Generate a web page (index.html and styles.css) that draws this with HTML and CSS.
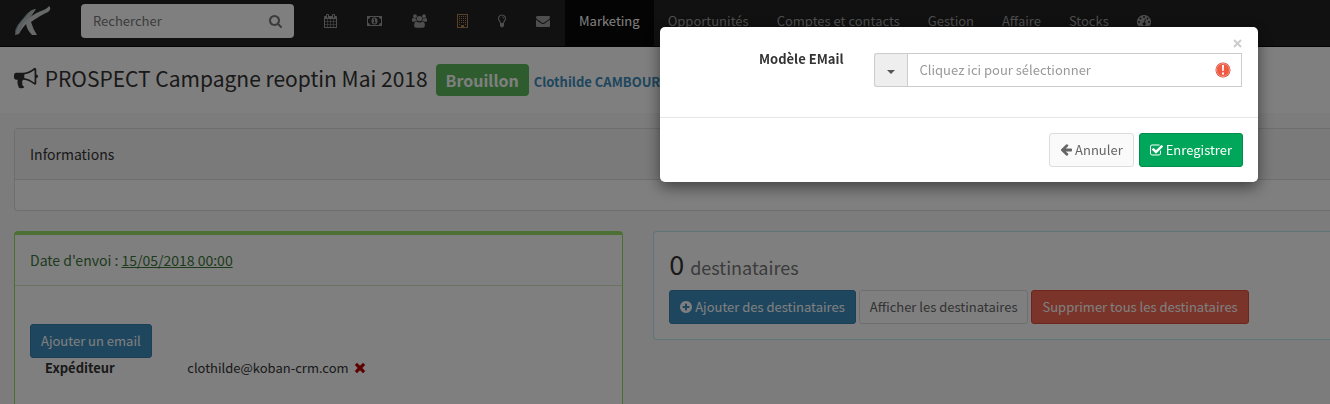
FILE: index.html
```
<!DOCTYPE html>
<html lang="fr">
<head>
    <meta charset="UTF-8">
    <meta name="viewport" content="width=device-width, initial-scale=1.0">
    <title>Campagne reoptin Mai 2018</title>
    <link rel="stylesheet" href="styles.css">
</head>
<body>

    <!-- Barre de navigation -->
    <header class="navbar">
        <a class="brand" href="#" aria-label="Accueil">
            <svg width="36" height="32" viewBox="0 0 36 32">
                <path d="M13 8 Q17 4 21 4 Q18 9 12 17 Q7 23 4 29 L0 30 Q0 23 7 15 Z" fill="#b9bec0"/>
                <path d="M8 19 Q17 9 26 6 Q32 4 34 1 Q37 4 33 7 Q26 10 16 17 Q18 24 22 30 L17 30 Q12 25 11 19 L5 26 Z" fill="#cfd2d3"/>
                <path d="M13 8 Q7 15 3 20 Q0 25 0 29" stroke="#6c8790" stroke-width="1" fill="none"/>
            </svg>
        </a>
        <form class="search">
            <input type="text" placeholder="Rechercher" aria-label="Rechercher">
            <button type="button" aria-label="Lancer la recherche">
                <svg width="13" height="13" viewBox="64 128 1664 1664"><path d="M1216 832q0-185-131.5-316.5t-316.5-131.5-316.5 131.5-131.5 316.5 131.5 316.5 316.5 131.5 316.5-131.5 131.5-316.5zm512 832q0 52-38 90t-90 38q-54 0-90-38l-343-342q-179 124-399 124-143 0-273.5-55.5t-225-150-150-225-55.5-273.5 55.5-273.5 150-225 225-150 273.5-55.5 273.5 55.5 225 150 150 225 55.5 273.5q0 220-124 399l343 343q37 37 37 90z"/></svg>
            </button>
        </form>
        <nav class="menu">
            <a href="#" aria-label="Agenda">
                <svg width="13" height="14" viewBox="64 0 1664 1792"><path d="M192 1664h288v-288h-288v288zm352 0h320v-288h-320v288zm-352-352h288v-320h-288v320zm352 0h320v-320h-320v320zm-352-384h288v-288h-288v288zm736 736h320v-288h-320v288zm-384-736h320v-288h-320v288zm768 736h288v-288h-288v288zm-384-352h320v-320h-320v320zm-352-864v-288q0-13-9.5-22.5t-22.5-9.5h-64q-13 0-22.5 9.5t-9.5 22.5v288q0 13 9.5 22.5t22.5 9.5h64q13 0 22.5-9.5t9.5-22.5zm736 864h288v-320h-288v320zm-384-384h320v-288h-320v288zm384 0h288v-288h-288v288zm32-480v-288q0-13-9.5-22.5t-22.5-9.5h-64q-13 0-22.5 9.5t-9.5 22.5v288q0 13 9.5 22.5t22.5 9.5h64q13 0 22.5-9.5t9.5-22.5zm384-64v1280q0 52-38 90t-90 38h-1408q-52 0-90-38t-38-90v-1280q0-52 38-90t90-38h128v-96q0-66 47-113t113-47h64q66 0 113 47t47 113v96h384v-96q0-66 47-113t113-47h64q66 0 113 47t47 113v96h128q52 0 90 38t38 90z"/></svg>
            </a>
            <a href="#" aria-label="Finances">
                <svg width="15" height="14" viewBox="0 0 15 14"><path fill-rule="evenodd" d="M0 2h15v10H0zM3 3Q3 5 1 5v4Q3 9 3 11h9Q12 9 14 9V5Q12 5 12 3z"/><ellipse cx="7.500" cy="7" rx="3" ry="3.500"/><path class="hole" d="M7 4.800h1v3.500h.8v.9H6.200v-.9H7V6h-.9z"/></svg>
            </a>
            <a href="#" aria-label="Contacts">
                <svg width="15" height="14" viewBox="0 0 15 14"><circle cx="3" cy="2.200" r="1.900"/><circle cx="12" cy="2.200" r="1.900"/><circle cx="7.500" cy="4.600" r="2.700"/><path d="M0 7V5.500Q0 4 1 4l2 .6L4.200 4.300Q4.200 6 5 7H4Q3 7 2.400 7.700H.9Q0 7.700 0 7zM15 7V5.500Q15 4 14 4l-2 .6-1.200-.3Q10.800 6 10 7h1q1 0 1.600.7h1.500Q15 7.700 15 7zM2.200 12v-1.500Q2.400 7.600 4.600 7.500 6 8.600 7.500 8.600T10.400 7.500q2.200.1 2.400 3V12q0 1.700-1.800 1.700H4Q2.200 13.700 2.200 12z"/></svg>
            </a>
            <a class="current-app" href="#" aria-label="Entreprises">
                <svg width="11" height="14" viewBox="0 0 11 14"><path fill-rule="evenodd" d="M0 0h11v14H0zM1 1v12h3v-2h3v2h3V1z"/><path d="M2 2h1v1H2zM4 2h1v1H4zM6 2h1v1H6zM8 2h1v1H8zM2 4h1v1H2zM4 4h1v1H4zM6 4h1v1H6zM8 4h1v1H8zM2 6h1v1H2zM4 6h1v1H4zM6 6h1v1H6zM8 6h1v1H8zM2 8h1v1H2zM4 8h1v1H4zM6 8h1v1H6zM8 8h1v1H8zM2 10h1v1H2zM8 10h1v1H8z"/></svg>
            </a>
            <a href="#" aria-label="Idées">
                <svg width="8" height="14" viewBox="0 0 8 14"><path fill-rule="evenodd" d="M4 .5Q8 1 8 4.500 8 6 7 7.200 6 8.500 6 9.800v1.700Q6 13 4 13.500 2 13 2 11.500V9.800Q2 8.500 1 7.200 0 6 0 4.500 0 1 4 .5zM4 1.600Q1.200 1.900 1.100 4.500q0 1 .8 2Q2.900 7.800 3 9h2q.1-1.200 1.100-2.500.8-1 .8-2Q6.800 1.900 4 1.600z"/><path d="M4 2.600q2 .2 2 1.900h-.7Q5.200 3.400 4 3.300z"/></svg>
            </a>
            <a href="#" aria-label="Messages">
                <svg width="14" height="14" viewBox="0 0 1792 1792"><path d="M1792 710v794q0 66-47 113t-113 47h-1472q-66 0-113-47t-47-113v-794q44 49 101 87 362 246 497 345 57 42 92.500 65.500t94.500 48 110 24.500h2q51 0 110-24.500t94.500-48 92.500-65.500q170-123 498-345 57-39 100-87zm0-294q0 79-49 151t-122 123q-376 261-468 325-10 7-42.500 31t-54 38.500-52 32.500-57.500 27-50 9h-2q-23 0-50-9t-57.500-27-52-32.500-54-38.500-42.500-31q-91-64-262-182.500t-205-142.500q-62-42-117-115.500t-55-136.500q0-78 41.500-130t118.500-52h1472q65 0 112.500 47t47.500 113z"/></svg>
            </a>
            <a class="item active" href="#">Marketing</a>
            <a class="item" href="#">Opportunités</a>
            <a class="item" href="#">Comptes et contacts</a>
            <a class="item" href="#">Gestion</a>
            <a class="item" href="#">Affaire</a>
            <a class="item" href="#">Stocks</a>
            <a class="item" href="#" aria-label="Tableau de bord">
                <svg width="14" height="14" viewBox="0 0 14 14"><path d="M7 1a7 7 0 0 1 6 10.600q-.3.400-.8.400H1.800q-.5 0-.8-.4A7 7 0 0 1 7 1z"/><g class="hole"><circle cx="2" cy="8" r="1"/><circle cx="3.500" cy="4.500" r="1"/><circle cx="7" cy="3" r="1"/><circle cx="10.500" cy="4.500" r="1"/><circle cx="12" cy="8" r="1"/><path d="M8 4.800l.8.200-.8 3.600a1.500 1.500 0 1 1-.9-.2z"/></g></svg>
            </a>
        </nav>
    </header>

    <!-- Titre de la campagne -->
    <div class="page-title">
        <h1>
            <svg width="24" height="24" viewBox="0 0 1792 1792"><path d="M1664 640q53 0 90.500 37.500t37.500 90.500-37.500 90.500-90.500 37.500v384q0 52-38 90t-90 38q-417-347-812-380-58 19-91 66t-31 100.500 40 92.500q-20 33-23 65.500t6 58 33.500 55 48 50 61.500 50.500q-29 58-111.500 83t-168.500 11.500-132-55.500q-7-23-29.500-87.500t-32-94.500-23-89-15-101 3.500-98.500 22-110.500h-122q-66 0-113-47t-47-113v-192q0-66 47-113t113-47h480q435 0 896-384 52 0 90 38t38 90v384zm-128 604v-954q-394 302-768 343v270q377 42 768 341z"/></svg>
            PROSPECT Campagne reoptin Mai 2018
        </h1>
        <span class="label">Brouillon</span>
        <a class="owner" href="#">Clothilde CAMBOUR</a>
    </div>

    <main class="content">
        <section class="panel">
            <h2 class="panel-heading">Informations</h2>
            <div class="panel-body"></div>
        </section>

        <div class="columns">
            <section class="panel panel-send">
                <h2 class="panel-heading">Date d'envoi : <a href="#">15/05/2018 00:00</a></h2>
                <div class="panel-body">
                    <button class="btn btn-primary" type="button">Ajouter un email</button>
                    <dl class="sender">
                        <dt>Expéditeur</dt>
                        <dd>
                            clothilde@koban-crm.com
                            <button class="remove" type="button" aria-label="Retirer">
                                <svg width="10" height="10" viewBox="302 366 1188 1188"><path d="M1490 1322q0 40-28 68l-136 136q-28 28-68 28t-68-28l-294-294-294 294q-28 28-68 28t-68-28l-136-136q-28-28-28-68t28-68l294-294-294-294q-28-28-28-68t28-68l136-136q28-28 68-28t68 28l294 294 294-294q28-28 68-28t68 28l136 136q28 28 28 68t-28 68l-294 294 294 294q28 28 28 68z"/></svg>
                            </button>
                        </dd>
                    </dl>
                </div>
            </section>

            <section class="panel panel-recipients">
                <h2 class="count">0 <small>destinataires</small></h2>
                <div class="actions">
                    <button class="btn btn-primary" type="button">
                        <svg width="12" height="12" viewBox="128 128 1536 1536"><path d="M1344 960v-128q0-26-19-45t-45-19h-256v-256q0-26-19-45t-45-19h-128q-26 0-45 19t-19 45v256h-256q-26 0-45 19t-19 45v128q0 26 19 45t45 19h256v256q0 26 19 45t45 19h128q26 0 45-19t19-45v-256h256q26 0 45-19t19-45zm320-64q0 209-103 385.500t-279.500 279.500-385.500 103-385.500-103-279.500-279.500-103-385.500 103-385.500 279.500-279.500 385.500-103 385.500 103 279.500 279.500 103 385.500z"/></svg>
                        Ajouter des destinataires
                    </button>
                    <button class="btn btn-default" type="button">Afficher les destinataires</button>
                    <button class="btn btn-danger" type="button">Supprimer tous les destinataires</button>
                </div>
            </section>
        </div>
    </main>

    <!-- Fenêtre de choix du modèle -->
    <div class="backdrop">
        <form class="modal" role="dialog" aria-label="Modèle EMail">
            <div class="modal-body">
                <button class="close" type="button" aria-label="Fermer">
                    <svg width="9" height="9" viewBox="0 0 9 9"><path d="M1 1l7 7M8 1l-7 7" stroke="currentColor" stroke-width="2"/></svg>
                </button>
                <div class="form-row">
                    <label for="template">Modèle EMail</label>
                    <div class="input-group">
                        <button class="addon" type="button" aria-label="Ouvrir la liste">
                            <svg width="8" height="4" viewBox="0 0 8 4"><path d="M0 0h8L4 4z"/></svg>
                        </button>
                        <input type="text" id="template" placeholder="Cliquez ici pour sélectionner">
                        <svg class="error" width="16" height="16" viewBox="0 0 16 16"><circle cx="8" cy="8" r="7.500" fill="#c9402c"/><circle cx="8" cy="8" r="6.500" fill="#f05a43" stroke="#f79a8b" stroke-width="1"/><path d="M7 3h2l-.3 6H7.300zM7 10.500h2v2H7z" fill="#fff"/></svg>
                    </div>
                </div>
            </div>
            <div class="modal-footer">
                <button class="btn btn-default" type="button">
                    <svg width="12" height="12" viewBox="64 189 1600 1550"><path d="M1664 896v128q0 53-32.500 90.500t-84.500 37.500h-704l293 294q38 36 38 90t-38 90l-75 76q-37 37-90 37-52 0-91-37l-651-652q-37-37-37-90 0-52 37-91l651-650q38-38 91-38 52 0 90 38l75 74q38 38 38 91t-38 91l-293 293h704q52 0 84.500 37.500t32.500 90.500z"/></svg>
                    Annuler
                </button>
                <button class="btn btn-success" type="submit">
                    <svg width="13" height="13" viewBox="64 64 1664 1664"><path d="M1472 930v318q0 119-84.500 203.500t-203.500 84.500h-832q-119 0-203.500-84.500t-84.500-203.500v-832q0-119 84.500-203.500t203.500-84.500h832q63 0 117 25 15 7 18 23 3 17-9 29l-49 49q-10 10-23 10-3 0-9-2-23-6-45-6h-832q-66 0-113 47t-47 113v832q0 66 47 113t113 47h832q66 0 113-47t47-113v-254q0-13 9-22l64-64q10-10 23-10 6 0 12 3 20 8 20 29zm231-489l-814 814q-24 24-57 24t-57-24l-430-430q-24-24-24-57t24-57l110-110q24-24 57-24t57 24l263 263 647-647q24-24 57-24t57 24l110 110q24 24 24 57t-24 57z"/></svg>
                    Enregistrer
                </button>
            </div>
        </form>
    </div>

</body>
</html>
```
FILE: styles.css
```
* {
    box-sizing: border-box;
}

body {
    font-family: "Noto Sans CJK SC", "Open Sans", sans-serif;
    font-size: 13px;
    line-height: 20px;
    margin: 0;
    height: 100vh;
    overflow: hidden;
    background: #f8f8f8;
    color: #333;
}

button,
input {
    font: inherit;
}

button {
    cursor: pointer;
}

svg {
    display: block;
    flex: none;
    fill: currentColor;
}

a {
    color: #3c8dbc;
}

/* Navigation */
.navbar {
    display: flex;
    align-items: flex-start;
    height: 47px;
    background: #222;
    border-bottom: 1px solid #080808;
}

.brand {
    width: 81px;
    padding: 5px 15px;
}

.search {
    display: flex;
    width: 213px;
    height: 34px;
    margin: 4px 15px 0 0;
    background: #fff;
    border-radius: 4px;
}

.search input {
    flex: 1;
    min-width: 0;
    padding: 0 12px;
    border: 0;
    background: none;
}

.search input::placeholder {
    color: #777;
}

.search button {
    padding: 0 12px;
    border: 0;
    background: none;
    color: #777;
}

.menu {
    display: flex;
}

.menu a {
    display: flex;
    align-items: center;
    height: 46px;
    padding: 0 15px 4px;
    color: #9d9d9d;
    text-decoration: none;
    white-space: nowrap;
}

.menu .item {
    padding: 0 14px 4px;
}

.menu .active {
    background: #080808;
    color: #fff;
}

.menu .current-app {
    color: #b08055;
}

.hole {
    fill: #222;
}

/* Titre */
.page-title {
    display: flex;
    align-items: baseline;
    height: 66px;
    padding: 17px 14px 0;
    background: #fff;
    white-space: nowrap;
}

.page-title h1 {
    margin: 0 8px 0 0;
    font-size: 21px;
    font-weight: 400;
    line-height: 20px;
}

.page-title h1 svg {
    display: inline-block;
    margin-right: 2px;
    vertical-align: -3px;
}

.label {
    padding: 6px 10px;
    margin-right: 5px;
    border-radius: 4px;
    background: #5cb85c;
    color: #fff;
    font-size: 16px;
    font-weight: 700;
}

.owner {
    font-weight: 700;
    text-decoration: none;
}

/* Panneaux */
.content {
    padding: 15px 0 0 14px;
}

.panel {
    margin-bottom: 20px;
    border: 1px solid #ddd;
    border-radius: 4px;
    background: #fff;
}

.content > .panel {
    border-right: 0;
    border-radius: 4px 0 0 4px;
}

.panel-heading {
    margin: 0;
    padding: 15px;
    border-bottom: 1px solid #ddd;
    background: #f5f5f5;
    font-size: 14px;
    font-weight: 400;
}

.panel-body {
    padding: 15px;
}

.columns {
    display: grid;
    grid-template-columns: 9fr 10fr;
    gap: 30px;
    align-items: start;
}

.panel-send {
    min-height: 180px;
    border-color: #8ee05a;
    border-top: 4px solid #9be368;
}

.panel-send .panel-heading {
    background: none;
    border-color: #d6e9c6;
    color: #3c763d;
}

.panel-send .panel-heading a {
    color: inherit;
}

.panel-send .panel-body {
    padding-top: 38px;
}

.sender {
    display: flex;
    margin: 0;
    padding: 0 15px;
}

.sender dt {
    width: 26%;
    font-weight: 700;
}

.sender dd {
    display: flex;
    align-items: center;
    gap: 6px;
    margin: 0;
}

.remove {
    padding: 0;
    border: 0;
    background: none;
    color: #b00;
}

.panel-recipients {
    padding: 15px;
    border-color: #bce8f1;
    border-right: 0;
    border-radius: 4px 0 0 4px;
}

.count {
    margin: 0 0 6px;
    font-size: 27px;
    font-weight: 400;
    line-height: 33px;
}

.count small {
    color: #777;
    font-size: 18px;
}

/* Boutons */
.actions {
    display: flex;
    gap: 3px;
}

.btn {
    display: inline-flex;
    align-items: center;
    gap: 3px;
    padding: 6px 10px;
    border: 1px solid transparent;
    border-radius: 3px;
    color: #fff;
    white-space: nowrap;
}

.btn-primary {
    background: #3c8dbc;
    border-color: #367fa9;
}

.btn-default {
    background: #fafafa;
    border-color: #ddd;
    color: #666;
}

.actions .btn-default {
    background: none;
}

.btn-danger {
    background: #f56954;
    border-color: #e04b36;
}

.btn-success {
    background: #00a65a;
    border-color: #008d4c;
}

/* Fenêtre modale */
.backdrop {
    position: fixed;
    inset: 0;
    display: flex;
    justify-content: flex-end;
    align-items: flex-start;
    padding: 27px 72px;
    background: rgba(0, 0, 0, 0.5);
}

.modal {
    position: relative;
    width: 100%;
    max-width: 598px;
    border-radius: 5px;
    background: #fff;
    box-shadow: 0 5px 15px rgba(0, 0, 0, 0.5);
}

.modal-body {
    padding: 26px 16px 30px;
}

.close {
    position: absolute;
    top: 12px;
    right: 16px;
    padding: 0;
    border: 0;
    background: none;
    color: #ccc;
}

.form-row {
    display: grid;
    grid-template-columns: 5fr 11fr;
    gap: 30px;
}

.form-row label {
    font-weight: 700;
    line-height: 12px;
    text-align: right;
}

.input-group {
    position: relative;
    display: flex;
    height: 34px;
}

.addon {
    display: flex;
    align-items: center;
    padding: 4px 12px 0;
    border: 1px solid #ccc;
    border-right: 0;
    border-radius: 3px 0 0 3px;
    background: #eee;
    color: #555;
}

.input-group input {
    flex: 1;
    min-width: 0;
    padding: 0 40px 0 12px;
    border: 1px solid #ccc;
}

.input-group input::placeholder {
    color: #999;
}

.error {
    position: absolute;
    top: 9px;
    right: 11px;
}

.modal-footer {
    display: flex;
    justify-content: flex-end;
    gap: 5px;
    padding: 15px;
    border-top: 1px solid #e5e5e5;
}
```
